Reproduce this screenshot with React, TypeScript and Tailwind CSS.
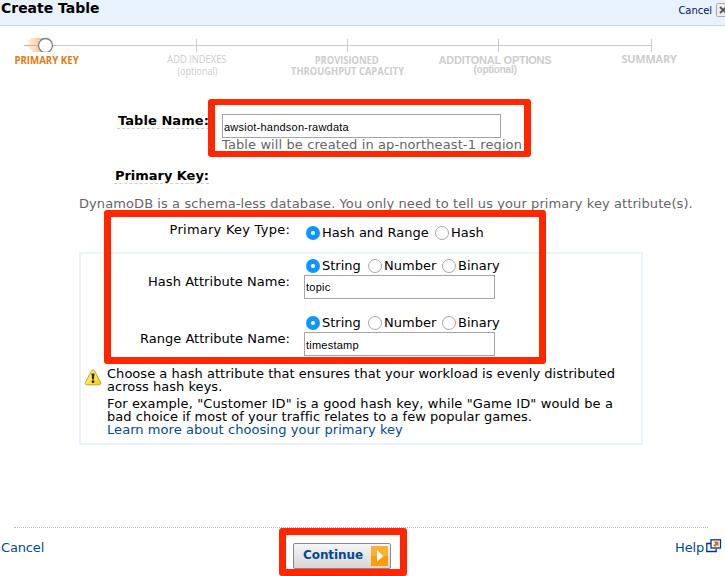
import React from "react";

const REMARK = "tracking-[0.03px]";

function Radio({ label, checked = false, className = "" }: { label: string; checked?: boolean; className?: string }) {
  return (
    <label className={`flex items-center h-[15px] ${className}`}>
      <svg width="16" height="16" viewBox="0 0 16 16" className="block shrink-0">
        {checked ? (
          <>
            <circle cx="8" cy="8" r="7" fill="#0c97fc" />
            <circle cx="8" cy="8" r="2.1" fill="#fff" />
          </>
        ) : (
          <circle cx="8" cy="8" r="6.5" fill="#fff" stroke="#a9a9a9" strokeWidth="1" />
        )}
      </svg>
      <span className="ml-px whitespace-nowrap leading-[15px]">{label}</span>
    </label>
  );
}

function Field({ value, className }: { value: string; className: string }) {
  return (
    <div className={`h-6 border border-[#a5a5a5] bg-white pl-px font-['Liberation_Sans',Arial,sans-serif] text-[11px] leading-[12px] ${className}`}>
      {value}
    </div>
  );
}

function TypeRow() {
  return (
    <div className="flex pl-px">
      <Radio label="String" checked className="w-[62px]" />
      <Radio label="Number" className="w-[74px]" />
      <Radio label="Binary" />
    </div>
  );
}

function Steps() {
  return (
    <div className="h-[61px]">
      <svg width="725" height="26" viewBox="0 0 725 26" className="block">
        <defs>
          <linearGradient id="trail" x1="0" x2="1">
            <stop offset="0" stopColor="#f6a75c" stopOpacity="0.08" />
            <stop offset="1" stopColor="#f0a465" stopOpacity="0.7" />
          </linearGradient>
        </defs>
        <path d="M52 19.5H652M196.5 13v13M347.5 13v13M498.5 13v13M651.5 13v13" stroke="#cbcbcb" fill="none" />
        <path d="M31 12h12v2H29zM27 14h12v2H26zM30 16h9v2H28zM26 18h13v1H25zM27 20h12v2H28zM30 22h10v2H29zM33 24h9v2H31z" fill="url(#trail)" />
        <path d="M24 19.5h15" stroke="#e9b084" />
        <circle cx="45.5" cy="19.5" r="7" fill="#fff" stroke="#7e7e7e" strokeWidth="1.3" />
      </svg>
      <div className="flex text-center font-['Open_Sans',sans-serif] text-[11px] leading-[12px] text-[#cdcdcd] whitespace-nowrap">
        <div className="flex w-[94px] justify-center pt-[2px] font-bold text-[#e47911]">
          <span className="block scale-x-[0.88]">PRIMARY KEY</span>
        </div>
        <div className="ml-[63px] flex w-20 flex-col items-center pt-px font-medium">
          <span className="block scale-x-[0.85]">ADD INDEXES</span>
          <span className="block scale-x-[0.82]">(optional)</span>
        </div>
        <div className="ml-[50px] flex w-[120px] flex-col items-center pt-[2px] font-bold leading-[11px]">
          <span className="block scale-x-[0.85]">PROVISIONED</span>
          <span className="block scale-x-[0.85]">THROUGHPUT CAPACITY</span>
        </div>
        <div className="ml-[28px] flex w-[120px] flex-col items-center pt-[3px] font-['Liberation_Sans',Arial,sans-serif] font-bold leading-[10px]">
          <span className="tracking-[-0.24px]">ADDITONAL OPTIONS</span>
          <span className="text-[10px] tracking-[-0.25px]">(optional)</span>
        </div>
        <div className="ml-[54px] flex w-20 justify-center pt-px font-bold">
          <span className="tracking-[-0.26px]">SUMMARY</span>
        </div>
      </div>
    </div>
  );
}

export default function App() {
  return (
    <div className="relative h-[576px] w-[725px] overflow-hidden bg-white font-['DejaVu_Sans',Verdana,sans-serif] text-[13px] leading-[15px] text-black">
      <header className="flex h-[26px] justify-between border-b border-[#c5dcea] bg-[#e8f2fd]">
        <h1 className="pl-px text-[14px] font-bold leading-[16px] tracking-[-0.02px]">Create Table</h1>
        <div className="flex">
          <span className="pt-[5px] text-[10px] leading-[11px] tracking-[-0.05px] text-[#00115f]">Cancel</span>
          <svg width="9" height="14" viewBox="0 0 9 14" className="ml-[4px] mt-[3px] block">
            <rect x="0.5" y="0.5" width="13" height="13" rx="1" fill="#ededed" stroke="#a9a9a9" />
            <path d="M4 4l6 6M10 4l-6 6" stroke="#555" strokeWidth="1.8" />
          </svg>
        </div>
      </header>

      <Steps />

      <main>
        <div className="flex pl-[117px] pt-[26px]">
          <div className="w-[92px] self-start whitespace-nowrap border-b border-dashed border-[#cfcfcf] pl-px font-bold tracking-[0.06px]">
            Table Name:
          </div>
          <div className="ml-[13px] mt-px">
            <Field value="awsiot-handson-rawdata" className="w-[279px] pt-[6px] tracking-[0.23px]" />
            <p className="whitespace-nowrap leading-[14px] tracking-[0.105px] text-[#666]">
              Table will be created in ap-northeast-1 region
            </p>
          </div>
        </div>
        <div className="ml-[114px] mt-[16px] w-[95px] whitespace-nowrap border-b border-dashed border-[#cfcfcf] pl-px font-bold tracking-[-0.04px]">
          Primary Key:
        </div>
        <p className="ml-[79px] mt-[12px] whitespace-nowrap tracking-[0.085px] text-[#666]">
          DynamoDB is a schema-less database. You only need to tell us your primary key attribute(s).
        </p>
        <div className="flex h-[41px] pt-[11px]">
          <span className="w-[290px] whitespace-nowrap text-right tracking-[0.24px]">Primary Key Type:</span>
          <div className="ml-[15px] mt-[3px] flex">
            <Radio label="Hash and Range" checked className="w-[129px]" />
            <Radio label="Hash" />
          </div>
        </div>

        <section className="ml-[79px] h-[193px] w-[564px] border-2 border-[#eaf4fe]">
          <div className="flex h-[57px]">
            <span className="mt-[20px] w-[209px] whitespace-nowrap text-right tracking-[0.04px]">Hash Attribute Name:</span>
            <div className="ml-[14px] pt-[4px]">
              <TypeRow />
              <Field value="topic" className="mt-[2px] w-[191px] pt-[5px] tracking-[0.23px]" />
            </div>
          </div>
          <div className="flex h-[57px]">
            <span className="mt-[20px] w-[209px] whitespace-nowrap text-right tracking-[0.02px]">Range Attribute Name:</span>
            <div className="ml-[14px] pt-[4px]">
              <TypeRow />
              <Field value="timestamp" className="mt-[2px] w-[191px] pt-[6px] tracking-[0.23px]" />
            </div>
          </div>
          <div className="-mt-px flex">
            <svg width="18" height="17" viewBox="0 0 18 17" className="ml-[3px] mt-[2px] block shrink-0">
              <defs>
                <linearGradient id="warn" x1="0" y1="0" x2="1" y2="1">
                  <stop offset="0" stopColor="#fff3a0" />
                  <stop offset="0.6" stopColor="#fbe33a" />
                  <stop offset="1" stopColor="#ecc60c" />
                </linearGradient>
              </defs>
              <path d="M9 .8c.7 0 1.1.3 1.5 1l6 11.500c.7 1.500.1 2.500-1.300 2.500H2.800c-1.400 0-2-1-1.300-2.500l6-11.500c.4-.7.8-1 1.500-1z" fill="url(#warn)" stroke="#c49a27" strokeWidth="0.9" />
              <path d="M7.500 4.600h3L9.800 10.600H8.200z" fill="#222" />
              <circle cx="9" cy="12.700" r="1.400" fill="#222" />
            </svg>
            <div className="ml-[5px] whitespace-nowrap leading-[13px]">
              <p className={REMARK}>
                Choose a hash attribute that ensures that your workload is evenly distributed
                <br />
                across hash keys.
              </p>
              <p className="mt-[4px]">
                <span className="tracking-[0.115px]">For example, "Customer ID" is a good hash key, while "Game ID" would be a</span>
                <br />
                <span className={REMARK}>bad choice if most of your traffic relates to a few popular games.</span>
                <br />
                <a className="tracking-[0.06px] text-[#004b91]">Learn more about choosing your primary key</a>
              </p>
            </div>
          </div>
        </section>
      </main>

      <footer className="mt-[82px]">
        <div className="ml-[14px] w-[694px] border-t border-dotted border-[#b9b9b9]" />
        <div className="flex">
          <a className="ml-px mt-[12px] w-[292px] tracking-[-0.15px] text-[#004b91]">Cancel</a>
          <button className="mt-[15px] flex h-[26px] w-[98px] items-start rounded-[2px] border border-[#8b8b8b] bg-linear-to-b from-[#f6f6f6] to-[#d6d6d6] pl-[9px] pt-[2px]">
            <span className="mt-[2px] w-[68px] text-left text-[12px] font-bold leading-[14px] tracking-[-0.08px] text-[#004b91]">Continue</span>
            <svg width="17" height="20" viewBox="0 0 17 20" className="block">
              <rect width="17" height="20" fill="#fbb034" />
              <path d="M0 10h17v10H0z" fill="#fb9d08" />
              <path d="M6 4.500l6.500 5.500-6.500 5.500z" fill="#fff" />
            </svg>
          </button>
          <a className="ml-[284px] mt-[12px] tracking-[-0.15px] text-[#004b91]">Help</a>
          <svg width="16" height="14" viewBox="0 0 16 14" className="ml-[2px] mt-[11px] block shrink-0">
            <path d="M5 4.500H.8v8h9.400V9.500" fill="#fff" stroke="#003399" strokeWidth="1.300" />
            <rect x="5" y="0.8" width="9.500" height="8.200" fill="#fff" stroke="#003399" strokeWidth="1.300" />
            <path d="M7.500 2.500h5v5l-1.500-1.500-2 2L7.300 6.500l2-2z" fill="#dc6b12" />
          </svg>
        </div>
      </footer>

      <div className="absolute left-[208px] top-[99px] h-[58px] w-[323px] rounded-[3px] border-x-7 border-y-[6.5px] border-[#ff2600]" />
      <div className="absolute left-[104px] top-[210px] h-[154px] w-[442px] rounded-[3px] border-7 border-[#ff2600]" />
      <div className="absolute left-[279px] top-[528px] h-[48px] w-[128px] rounded-[3px] border-7 border-[#ff2600]" />
    </div>
  );
}
